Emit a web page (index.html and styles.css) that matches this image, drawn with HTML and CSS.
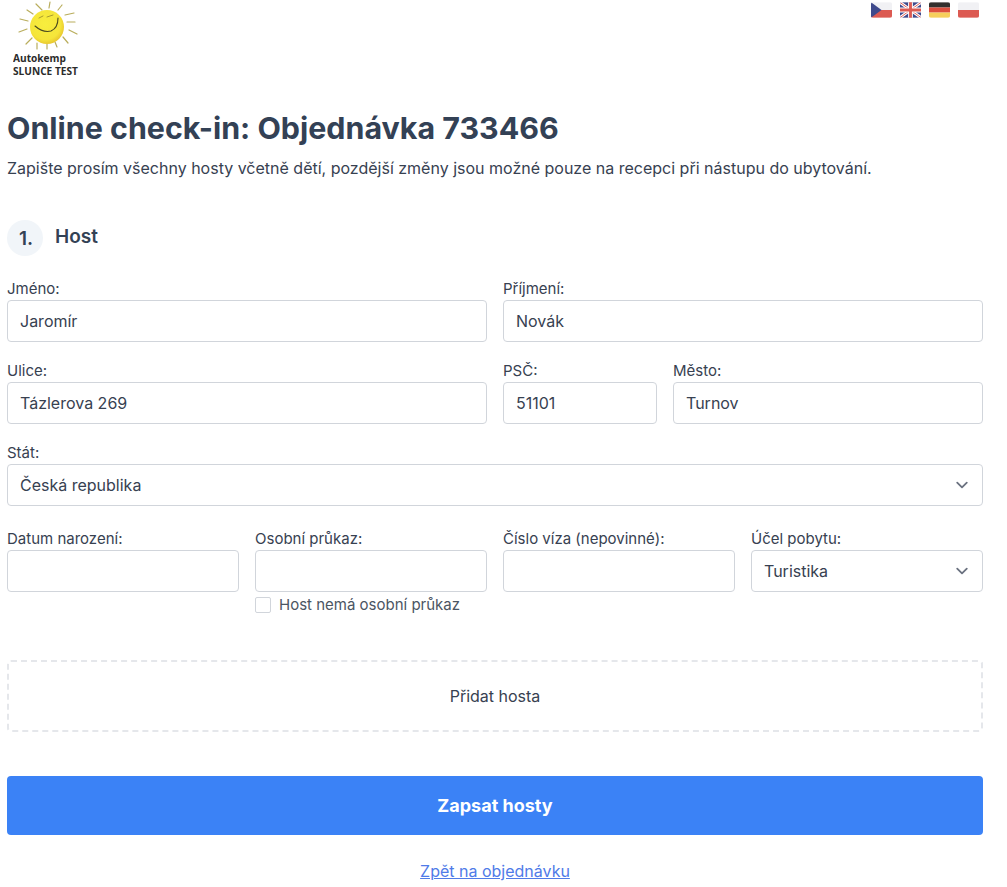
FILE: index.html
```html
<!DOCTYPE html>
<html lang="cs">
<head>
<meta charset="utf-8">
<title>Online check-in</title>
<link rel="stylesheet" href="styles.css">
</head>
<body>
<div class="page">
  <header class="top">
    <div class="logo">
      <svg class="sun" width="80" height="50" viewBox="0 0 80 50">
        <defs>
          <radialGradient id="sunfill" cx="45%" cy="42%" r="60%">
            <stop offset="0" stop-color="#f8ee3e"/>
            <stop offset=".75" stop-color="#f5e53a"/>
            <stop offset="1" stop-color="#e8c42c"/>
          </radialGradient>
        </defs>
        <g stroke="#b9ad5c" stroke-width="1.2" stroke-linecap="round" fill="none">
          <path d="M36 4 L42 10"/><path d="M50 2 L49 8"/><path d="M62 5 L58 10"/><path d="M27 10 L33 14"/>
          <path d="M20 19 L28 21"/><path d="M65 15 L74 13"/><path d="M67 22 L75 22"/><path d="M19 32 L27 29"/>
          <path d="M69 30 L77 34"/><path d="M26 44 L32 38"/><path d="M63 37 L68 43"/><path d="M55 42 L57 47"/>
          <path d="M47 44 L47 49"/><path d="M37 43 L37 49"/>
        </g>
        <circle cx="47" cy="27" r="17" fill="url(#sunfill)"/>
        <path d="M35 26 Q43 33 51 31 Q58 28 58 18" stroke="#4a4a20" stroke-width="1.1" fill="none" stroke-linecap="round"/>
        <path d="M39 18 L43 16" stroke="#a89c30" stroke-width="1" fill="none" stroke-linecap="round"/>
        <path d="M47 17 L53 15" stroke="#a89c30" stroke-width="1" fill="none" stroke-linecap="round"/>
      </svg>
      <div class="logo-text">Autokemp<br>SLUNCE TEST</div>
    </div>
    <nav class="flags">
      <svg class="flag" viewBox="0 0 22 16"><rect width="22" height="8" fill="#f1f1f4"/><rect y="8" width="22" height="8" fill="#dc5a52"/><path d="M0 0 L11 8 L0 16Z" fill="#3f4a8c"/></svg>
      <svg class="flag" viewBox="0 0 22 16"><rect width="22" height="16" fill="#3f4a8c"/><path d="M0 0 L22 16 M22 0 L0 16" stroke="#fff" stroke-width="3"/><path d="M0 0 L22 16 M22 0 L0 16" stroke="#dc5a52" stroke-width="1"/><path d="M11 0 V16 M0 8 H22" stroke="#fff" stroke-width="5"/><path d="M11 0 V16 M0 8 H22" stroke="#dc5a52" stroke-width="3"/></svg>
      <svg class="flag" viewBox="0 0 22 16"><rect width="22" height="5.4" fill="#33302e"/><rect y="5.4" width="22" height="5.3" fill="#dc4f3f"/><rect y="10.7" width="22" height="5.3" fill="#f6cf5c"/></svg>
      <svg class="flag" viewBox="0 0 22 16"><rect width="22" height="8" fill="#f1f1f4"/><rect y="8" width="22" height="8" fill="#dc5a52"/></svg>
    </nav>
  </header>

  <h1 class="title">Online check-in: Objednávka 733466</h1>
  <p class="intro">Zapište prosím všechny hosty včetně dětí, pozdější změny jsou možné pouze na recepci při nástupu do ubytování.</p>

  <form class="guest">
    <div class="guest-head"><span class="badge">1.</span><h2 class="guest-title">Host</h2></div>

    <div class="row two">
      <label class="field"><span class="lab">Jméno:</span><input class="ctl" value="Jaromír"></label>
      <label class="field"><span class="lab">Příjmení:</span><input class="ctl" value="Novák"></label>
    </div>
    <div class="row two">
      <label class="field"><span class="lab">Ulice:</span><input class="ctl" value="Tázlerova 269"></label>
      <div class="city">
        <label class="field"><span class="lab">PSČ:</span><input class="ctl" value="51101"></label>
        <label class="field"><span class="lab">Město:</span><input class="ctl" value="Turnov"></label>
      </div>
    </div>
    <div class="row">
      <label class="field"><span class="lab">Stát:</span>
        <select class="ctl sel"><option>Česká republika</option></select></label>
    </div>
    <div class="row four">
      <label class="field"><span class="lab">Datum narození:</span><input class="ctl"></label>
      <div class="field">
        <label class="lab" for="op">Osobní průkaz:</label><input id="op" class="ctl">
        <label class="check"><input type="checkbox" class="box"><span>Host nemá osobní průkaz</span></label>
      </div>
      <label class="field"><span class="lab">Číslo víza (nepovinné):</span><input class="ctl"></label>
      <label class="field"><span class="lab">Účel pobytu:</span>
        <select class="ctl sel"><option>Turistika</option></select></label>
    </div>
  </form>

  <div class="add">Přidat hosta</div>
  <button class="submit" type="button">Zapsat hosty</button>
  <div class="back"><a href="#">Zpět na objednávku</a></div>
</div>
</body>
</html>
```
FILE: styles.css
```css
* { box-sizing: border-box; }
html, body { margin: 0; padding: 0; background: #fff; }
body { font-family: Inter, "Liberation Sans", sans-serif; color: #374151; overflow-x: hidden; }
.page { width: 990px; padding: 0 7px; }
.top { display: flex; justify-content: space-between; align-items: flex-start; height: 80px; }
.logo { width: 80px; height: 80px; }
.sun { display: block; margin-left: -7px; }
.logo-text { font-family: "Open Sans", "Noto Sans", sans-serif; font-weight: 700; font-size: 11px; line-height: 13px; color: #2b2b2b; margin: 1px 0 0 6px; transform-origin: left top; transform: scaleX(.92); white-space: nowrap; }
.flags { display: flex; gap: 8px; padding: 2px 4px 0 0; }
.flag { width: 21px; height: 16px; border-radius: 2px; display: block; }
.title { margin: 29px 0 0; font-size: 30.4px; line-height: 38px; font-weight: 700; color: #334155; }
.intro { margin: 9px 0 0; font-size: 16px; line-height: 24px; color: #374151; }
.guest { margin-top: 40px; }
.guest-head { display: flex; align-items: center; gap: 12px; height: 36px; margin-bottom: 22px; }
.badge { width: 36px; height: 36px; border-radius: 50%; background: #f1f5f9; display: flex; align-items: center; justify-content: center; font-weight: 600; font-size: 19px; color: #334155; padding-left: 2px; }
.guest-title { margin: 0; font-size: 19px; line-height: 28px; font-weight: 600; color: #334155; transform: translateY(-1px); }
.row { display: grid; grid-template-columns: 1fr; gap: 16px; margin-bottom: 18px; }
.row.two { grid-template-columns: 1fr 1fr; }
.row.four { grid-template-columns: repeat(4, 1fr); margin-top: 22px; margin-bottom: 0; }
.city { display: grid; grid-template-columns: 154px 1fr; gap: 16px; }
.field { display: block; min-width: 0; }
.lab { display: block; font-size: 15px; line-height: 20px; height: 22px; padding-top: 1px; color: #374151; }
.ctl { display: block; width: 100%; height: 42px; border: 1px solid #d1d5db; border-radius: 4px; background: #fff; padding: 0 12px; font: 400 16px Inter, "Liberation Sans", sans-serif; color: #374151; outline: none; }
.sel { appearance: none; -webkit-appearance: none; padding-right: 40px; background-image: url("data:image/svg+xml,%3Csvg xmlns='http://www.w3.org/2000/svg' viewBox='0 0 20 20'%3E%3Cpath d='M6 8l4 4 4-4' fill='none' stroke='%236b7280' stroke-width='1.5' stroke-linecap='round' stroke-linejoin='round'/%3E%3C/svg%3E"); background-repeat: no-repeat; background-position: right 8px center; background-size: 24px 24px; }
.check { display: flex; align-items: center; gap: 8px; margin-top: 5px; font-size: 15px; line-height: 16px; color: #4b5563; }
.box { appearance: none; -webkit-appearance: none; width: 16px; height: 16px; margin: 0; border: 1px solid #d1d5db; border-radius: 2px; background: #fff; flex: none; }
.add { margin-top: 47px; height: 72px; border: 2px dashed #e5e7eb; border-radius: 4px; display: flex; align-items: center; justify-content: center; font-size: 16px; color: #374151; }
.submit { display: block; width: 100%; height: 59px; margin-top: 44px; border: 0; border-radius: 4px; background: #3b82f6; color: #fff; font: 700 18px Inter, "Liberation Sans", sans-serif; }
.back { margin-top: 24px; text-align: center; font-size: 16px; line-height: 24px; }
.back a { color: #4f7be8; text-decoration: underline; }
```
